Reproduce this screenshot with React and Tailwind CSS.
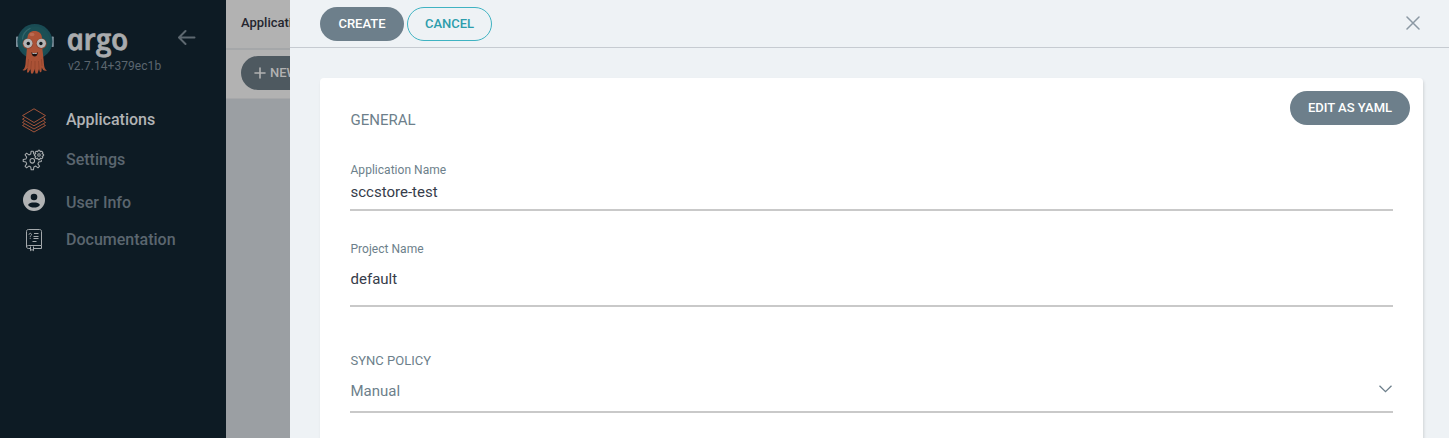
import React from 'react';

function Octopus() {
  return (
    <svg width="40" height="52" viewBox="0 0 40 52">
      <rect x="1" y="13.500" width="2.500" height="10.500" rx="0.800" fill="#7d8f9b" />
      <rect x="36.300" y="13.500" width="2.500" height="10.500" rx="0.800" fill="#7d8f9b" />
      <circle cx="19.900" cy="18.500" r="17.500" fill="#194b54" />
      <circle cx="19.900" cy="18.500" r="15.300" fill="#1b4f55" />
      <path d="M7.500 16C8 11 11 7.500 15 5.500" fill="none" stroke="#34666c" strokeWidth="1.200" strokeLinecap="round" />
      <path
        d="M12.500 15C12.500 10.500 15.500 8 19.500 8S27 10.500 27 15C27 21 27.400 26 28 31.500L28.700 38C29 43 29.500 46.500 32 47.500C29.500 48.500 27.500 47 26.800 44.500L26.500 48.500L25 49.500L24 46L22.500 50.500L20.500 50.500L19.700 46L18 50.500L16 50.500L15.500 46L13.500 49.500L12 49.500L12.500 44.500C11.500 47 9.500 48.500 7.500 47C9.800 46 10.500 43 10.700 38L11.500 30C12.200 25 12.500 20 12.500 15Z"
        fill="#ab5236"
      />
      <path d="M13.500 36L12.700 44M16.500 38L15.700 47M20 38V48M23.500 38L24.200 47M26.300 36L27 43" fill="none" stroke="#8a3f29" strokeWidth="0.600" />
      <ellipse cx="17" cy="11.500" rx="2.600" ry="1.800" fill="#bb6a50" />
      <circle cx="12.900" cy="20.500" r="5.300" fill="#8f452f" />
      <circle cx="26.300" cy="20.500" r="5.300" fill="#8f452f" />
      <circle cx="12.900" cy="20.300" r="4.600" fill="#b4b4b4" />
      <circle cx="26.300" cy="20.300" r="4.600" fill="#b4b4b4" />
      <circle cx="13.300" cy="20.500" r="1.700" fill="#10171b" />
      <circle cx="25.900" cy="20.500" r="1.700" fill="#10171b" />
      <path d="M16.300 29.200Q19.600 31 23 29.200Q22.300 33.400 19.700 33.400Q17 33.400 16.300 29.200Z" fill="#1b1213" />
      <path d="M17.300 29.800Q19.600 30.700 22 29.800L21.700 30.900H17.600Z" fill="#b4b4b4" />
    </svg>
  );
}

function LayersIcon() {
  return (
    <svg width="26" height="26" viewBox="0 0 26 26" fill="none" stroke="#a1543a" strokeWidth="1" strokeLinejoin="round">
      <path d="M13 1.800L24.500 8.600L13 15.500L1.500 8.600Z" />
      <path d="M3.500 10.800L1.500 12.200L13 18.800L24.500 12.200L22.500 10.800" />
      <path d="M3.500 14.100L1.500 15.500L13 22L24.500 15.500L22.500 14.100" />
      <path d="M3.500 17.300L1.500 18.500L13 25L24.500 18.500L22.500 17.300" />
    </svg>
  );
}

function GearsIcon() {
  return (
    <svg width="24" height="24" viewBox="0 0 24 24" fill="none" stroke="#a9adaf" strokeWidth="1.050" strokeLinejoin="round">
      <path d="M11.700 6.200L11.300 3.200H9.100L8.700 6.100L6.900 6.900L4.600 5.200L3 6.800L4.700 9.100L4 10.900L1.200 11.400V13.600L4 14.100L4.700 15.900L3 18.200L4.600 19.800L6.900 18.100L8.700 18.900L9.200 21.800H11.400L11.900 18.900L13.700 18.100L16 19.800L17.600 18.200L15.900 15.900L16.700 14.100L19.300 13.600V12" />
      <circle cx="10.300" cy="12.800" r="2.300" />
      <path d="M16.200 2.300H17.800L18.200 3.800L19.600 3.200L20.800 4.400L20.100 5.700L21.600 6.200V7.800L20.100 8.300L20.800 9.600L19.600 10.800L18.200 10.100L17.800 11.600H16.200L15.700 10.100L14.300 10.800L13.100 9.600L13.800 8.300L12.400 7.800V6.200L13.800 5.700L13.100 4.400L14.300 3.200L15.700 3.800Z" />
      <circle cx="17" cy="7" r="1.300" />
    </svg>
  );
}

function UserIcon() {
  return (
    <svg width="22" height="22" viewBox="0 0 22 22">
      <circle cx="11" cy="11" r="11" fill="#b1b3b4" />
      <circle cx="11" cy="8" r="3.300" fill="#0d1b24" />
      <path d="M5 16C6 13.800 8.200 13.500 11 13.500S16 13.800 17 16C15.500 17.800 13.500 18.600 11 18.600S6.500 17.800 5 16Z" fill="#0d1b24" />
    </svg>
  );
}

function BookIcon() {
  return (
    <svg width="18" height="24" viewBox="0 0 18 24" fill="none" stroke="#a4a9ac" strokeWidth="1">
      <path d="M5.500 20.500H3.500C1 20.500 1 17.500 3.500 17.500H16.500V3.500C16.500 2.200 15.800 1.500 14.500 1.500H3.500C2.200 1.500 1.500 2.200 1.500 3.500V19" />
      <path d="M8.500 20.500H16.500V17.500M5.500 18.500V22.700L7 21.500L8.500 22.700V18.500" />
      <path d="M4 6.700C4 4.800 6.700 5 6.500 6.700C6.400 7.800 5.200 7.500 5.200 8.800M5.200 9.800V10.800M9 5.500H13.500M8.500 8.500H13.500M8.500 10.500H13.500M7.500 13.500H11.500" />
    </svg>
  );
}

function NavItem({ icon, label, className }) {
  return (
    <div className={`flex items-center ${className}`}>
      <span className="flex w-[68px] shrink-0 justify-center">{icon}</span>
      <span className="-ml-0.5 text-[16px] leading-5 font-medium">{label}</span>
    </div>
  );
}

function Sidebar() {
  return (
    <aside className="h-full w-[226px] shrink-0 bg-[#0d1b24] text-[#5b666f]">
      <div className="flex h-[99px] pt-[23px] pl-[15px]">
        <Octopus />
        <div className="ml-[13px] w-[110px]">
          <div className="-ml-[4px] h-[34px] origin-left skew-x-12 pl-[2px] font-['Open_Sans',sans-serif] text-[30px] leading-[32px] font-semibold tracking-[-0.3px] text-[#a9abad] italic [-webkit-text-stroke:0.7px_#a9abad]">argo</div>
          <div className="text-[12px] leading-[18px] tracking-[0.06px]">v2.7.14+379ec1b</div>
        </div>
        <svg className="mt-[6px]" width="18" height="18" viewBox="0 0 18 18" fill="none" stroke="#5d6870" strokeWidth="2" strokeLinecap="round" strokeLinejoin="round">
          <path d="M16.500 8.500H1.500M7.500 2L1 8.500L7.500 15" />
        </svg>
      </div>
      <nav>
        <NavItem icon={<LayersIcon />} label="Applications" className="h-[42px] text-[#b1b3b5]" />
        <NavItem icon={<GearsIcon />} label="Settings" className="h-[38px]" />
        <div className="flex h-[46px]">
          <span className="flex w-[66px] shrink-0 justify-center pt-[10px] pl-[2px]"><UserIcon /></span>
          <span className="pt-[14px] text-[16px] leading-5 font-medium">User Info</span>
        </div>
        <NavItem icon={<BookIcon />} label="Documentation" className="h-[30px]" />
      </nav>
    </aside>
  );
}

function PageBehind() {
  return (
    <div className="h-full w-16 shrink-0 overflow-hidden bg-[#9b9fa3] whitespace-nowrap">
      <div className="h-[50px] border-b-2 border-[#a5a7a9] bg-[#b2b2b2] pt-[13px] pl-[15px] text-[13px] leading-5 font-medium text-[#25262f]">Applications</div>
      <div className="h-[49px] border-b border-[#a7a8aa] bg-[#b2b2b2] pt-[6px] pl-[15px]">
        <div className="flex h-[34px] w-[120px] items-center rounded-full bg-[#4e5960] pl-[13px] text-[13px] font-medium text-[#b2b2b2]">
          <svg className="mr-[4px]" width="12" height="12" viewBox="0 0 12 12" stroke="currentColor" strokeWidth="1.600" strokeLinecap="round">
            <path d="M6 1V11M1 6H11" />
          </svg>
          NEW APP
        </div>
      </div>
    </div>
  );
}

export default function App() {
  return (
    <div className="flex h-[438px] w-full overflow-hidden font-[Roboto,sans-serif]">
      <Sidebar />
      <PageBehind />
      <main className="h-full min-w-0 flex-1 bg-[#eef2f5]">
        <header className="flex h-12 items-start gap-[3px] border-b border-[#c6cbd1] pt-[7px] pl-[30px]">
          <button className="h-[34px] w-[84px] rounded-full bg-[#6d7f8b] text-[13px] font-medium text-white">CREATE</button>
          <button className="h-[34px] w-[85px] rounded-full border border-[#3fb3c2] text-[13px] font-medium text-[#2d9dac]">CANCEL</button>
          <svg className="mt-[9px] mr-[29px] ml-auto" width="14" height="14" viewBox="0 0 14 14" stroke="#8b98a3" strokeWidth="1.500" strokeLinecap="round">
            <path d="M1 1L13 13M13 1L1 13" />
          </svg>
        </header>
        <section className="mt-[30px] mr-[26px] ml-[30px] h-[400px] rounded-[4px] bg-white pl-[30px] shadow-[1px_2px_3px_rgba(0,0,0,0.12)]">
          <div className="flex h-[82px] justify-between pt-[13px] pr-[13px]">
            <h2 className="mt-[18px] pl-[0.5px] text-[15px] leading-[22px] text-[#6d7f8b]">GENERAL</h2>
            <button className="h-[34px] w-[120px] rounded-full bg-[#6d7f8b] text-[13px] font-medium text-white">EDIT AS YAML</button>
          </div>
          <div className="mr-[30px]">
            <div className="h-[51px] border-b-2 border-[#c9c9c9] pl-[0.5px]">
              <div className="text-[12px] leading-5 tracking-[0.03px] text-[#6d7f8b]">Application Name</div>
              <div className="pt-[1px] text-[15px] leading-[22px] text-[#363c4a]">sccstore-test</div>
            </div>
            <div className="mt-7 h-[68px] border-b-2 border-[#c9c9c9] pl-[0.5px]">
              <div className="text-[12px] leading-5 tracking-[0.03px] text-[#6d7f8b]">Project Name</div>
              <div className="pt-[9px] text-[15px] leading-[22px] text-[#363c4a]">default</div>
            </div>
            <div className="mt-11 h-[62px] border-b-2 border-[#c9c9c9] pl-[0.5px]">
              <div className="text-[13px] leading-5 text-[#6d7f8b]">SYNC POLICY</div>
              <div className="flex items-center justify-between pt-[9px] text-[15px] leading-[22px] text-[#6d7f8b]">
                Manual
                <svg className="-mt-[4px] mr-[1px]" width="13" height="8" viewBox="0 0 13 8" fill="none" stroke="#6d7f8b" strokeWidth="1.300">
                  <path d="M0.500 0.700L6.500 6.700L12.500 0.700" />
                </svg>
              </div>
            </div>
          </div>
        </section>
      </main>
    </div>
  );
}
